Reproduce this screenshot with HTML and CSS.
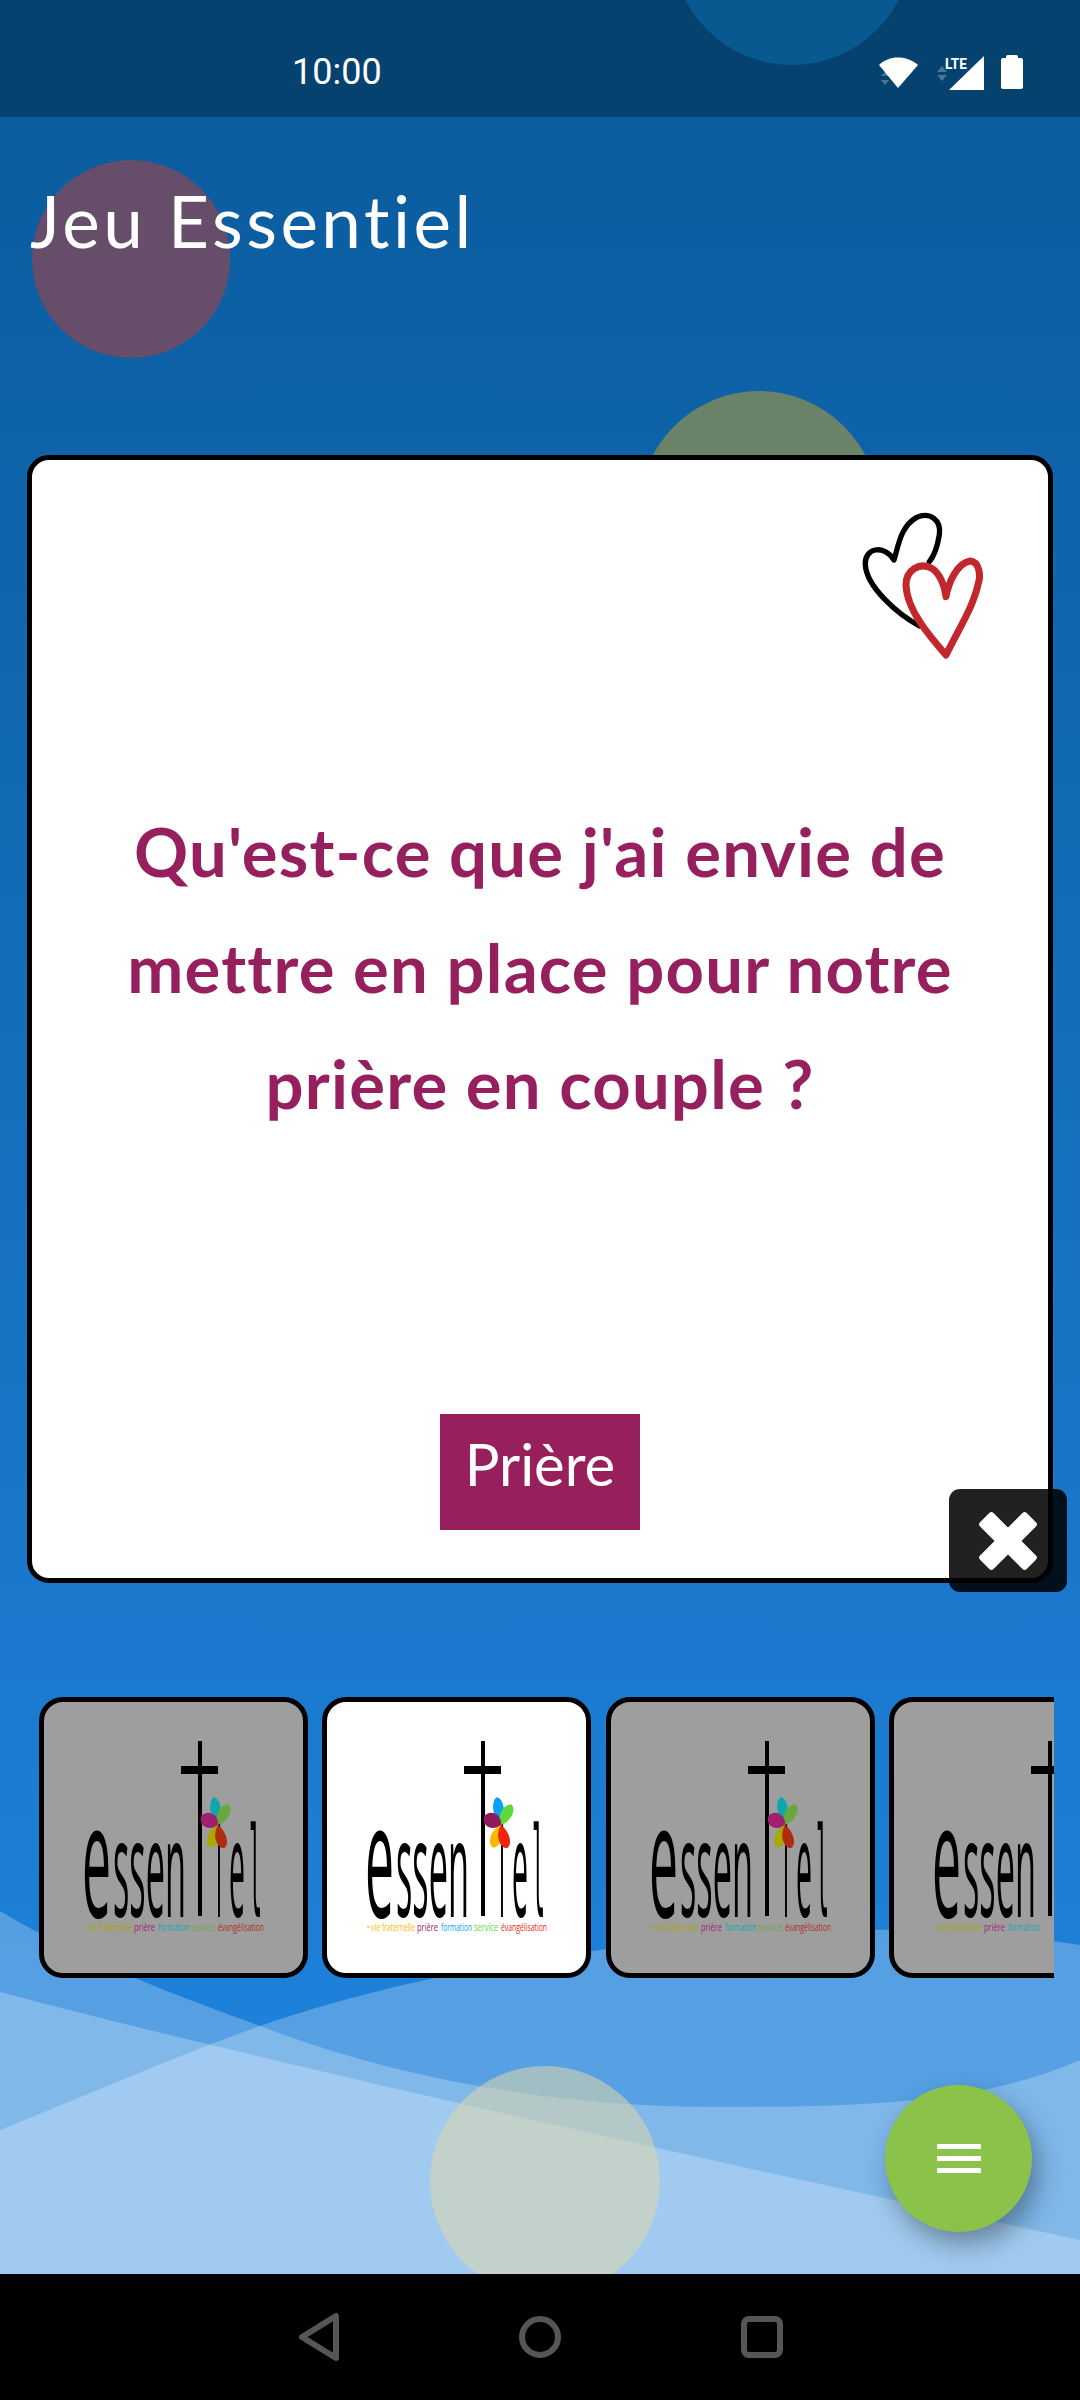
FILE: index.html
```html
<!DOCTYPE html>
<html lang="fr">
<head>
    <meta charset="UTF-8">
    <meta name="viewport" content="width=device-width, initial-scale=1.0">
    <title>Jeu Essentiel</title>
    <link rel="stylesheet" href="styles.css">
</head>
<body>

    <div class="screen">

        <!-- Background decoration -->
        <div class="bubble bubble-blue"></div>
        <div class="bubble bubble-red"></div>
        <div class="bubble bubble-green"></div>
        <svg class="waves" viewBox="0 0 1080 500" preserveAspectRatio="none">
            <path d="M0 31C90 85 190 120 260 146C400 200 560 227 716 227C850 227 980 225 1080 180V394H0Z"/>
            <path d="M0 250C90 214 170 178 260 146C420 90 640 55 864 50C950 48 1020 55 1080 65V394H0Z"/>
            <path d="M0 112C200 165 600 258 1080 360V394H0Z"/>
        </svg>
        <div class="bubble bubble-pale"></div>

        <div class="status-bar">
            <span class="clock">10:00</span>
            <div class="status-icons">
                <svg class="icon-wifi" width="44" height="36" viewBox="0 0 44 36">
                    <path class="muted" d="M5 22l4 -4 4 4ZM5 26h8l-4 5Z"/>
                    <path d="M3 11C13 1 31 1 42 11L22 34Z"/>
                </svg>
                <svg class="icon-signal" width="50" height="38" viewBox="0 0 50 38">
                    <path class="muted" d="M2 19l5 -6 5 6ZM2 22h10l-5 6Z"/>
                    <path d="M49 3V37H14Z"/>
                    <text x="10" y="16" class="lte" textLength="22" lengthAdjust="spacingAndGlyphs">LTE</text>
                </svg>
                <svg class="icon-battery" width="24" height="36" viewBox="0 0 24 36">
                    <path d="M6 3Q6 1 8 1H16Q18 1 18 3V4H21Q23 4 23 6V33Q23 35 21 35H3Q1 35 1 33V6Q1 4 3 4H6Z"/>
                </svg>
            </div>
        </div>

        <h1 class="page-title">Jeu Essentiel</h1>

        <div class="question-card">
            <svg class="hearts" width="200" height="200" viewBox="0 0 600 600">
                <path class="heart-black" d="M298 438C230 400 140 320 136 255C132 205 190 190 222 240C235 200 240 140 290 112C330 95 365 120 358 165C352 200 345 225 328 245"/>
                <path class="heart-red" d="M378 525C330 470 260 390 258 315C258 270 300 245 335 265C360 280 375 320 378 350C385 310 410 250 450 243C480 245 482 290 475 310C460 380 420 440 378 525Z"/>
            </svg>
            <p class="question">Qu'est-ce que j'ai envie de<br>mettre en place pour notre<br>prière en couple ?</p>
            <div class="category">Prière</div>
        </div>

        <div class="strip">
            <div class="logo-card dimmed">
                <svg class="logo" viewBox="0 0 259 271">
                    <text class="logo-word" x="38" y="215" font-size="160" textLength="29" lengthAdjust="spacingAndGlyphs">e</text>
                    <text class="logo-word" x="69" y="215" font-size="135" textLength="73" lengthAdjust="spacingAndGlyphs">ssen</text>
                    <rect x="154" y="39" width="4" height="175"/>
                    <rect x="137" y="64" width="37" height="8"/>
                    <text class="logo-word" x="172" y="215" font-size="135" textLength="6" lengthAdjust="spacingAndGlyphs">i</text>
                    <text class="logo-word" x="185" y="215" font-size="135" textLength="16" lengthAdjust="spacingAndGlyphs">e</text>
                    <text class="logo-mono" x="205" y="215" font-size="125" textLength="13" lengthAdjust="spacingAndGlyphs">l</text>
                    <g transform="translate(174 123)">
                        <path class="petal-a" d="M0 0C-9 -9 -8 -26 -2 -28C5 -26 6 -10 0 0Z" transform="rotate(-4)"/>
                        <path class="petal-b" d="M0 0C-9 -7 -8 -20 -1 -23C7 -20 6 -7 0 0Z" transform="rotate(30)"/>
                        <path class="petal-c" d="M0 0C-11 -4 -11 -17 -1 -19C9 -17 9 -4 0 0Z" transform="rotate(-58)"/>
                        <path class="petal-d" d="M0 0C-9 8 -8 22 -1 24C6 22 6 8 0 0Z" transform="rotate(17)"/>
                        <path class="petal-e" d="M0 0C-9 8 -8 22 -1 24C6 22 6 8 0 0Z" transform="rotate(-17)"/>
                    </g>
                    <text class="logo-tag tag-d" x="40" y="229" textLength="48" lengthAdjust="spacingAndGlyphs">• vie fraternelle</text>
                    <text class="logo-tag tag-c" x="90" y="229" textLength="21" lengthAdjust="spacingAndGlyphs">prière</text>
                    <text class="logo-tag tag-a" x="114" y="229" textLength="31" lengthAdjust="spacingAndGlyphs">formation</text>
                    <text class="logo-tag tag-b" x="147" y="229" textLength="24" lengthAdjust="spacingAndGlyphs">service</text>
                    <text class="logo-tag tag-e" x="174" y="229" textLength="46" lengthAdjust="spacingAndGlyphs">évangélisation</text>
                </svg>
            </div>
            <div class="logo-card">
                <svg class="logo" viewBox="0 0 259 271">
                    <text class="logo-word" x="38" y="215" font-size="160" textLength="29" lengthAdjust="spacingAndGlyphs">e</text>
                    <text class="logo-word" x="69" y="215" font-size="135" textLength="73" lengthAdjust="spacingAndGlyphs">ssen</text>
                    <rect x="154" y="39" width="4" height="175"/>
                    <rect x="137" y="64" width="37" height="8"/>
                    <text class="logo-word" x="172" y="215" font-size="135" textLength="6" lengthAdjust="spacingAndGlyphs">i</text>
                    <text class="logo-word" x="185" y="215" font-size="135" textLength="16" lengthAdjust="spacingAndGlyphs">e</text>
                    <text class="logo-mono" x="205" y="215" font-size="125" textLength="13" lengthAdjust="spacingAndGlyphs">l</text>
                    <g transform="translate(174 123)">
                        <path class="petal-a" d="M0 0C-9 -9 -8 -26 -2 -28C5 -26 6 -10 0 0Z" transform="rotate(-4)"/>
                        <path class="petal-b" d="M0 0C-9 -7 -8 -20 -1 -23C7 -20 6 -7 0 0Z" transform="rotate(30)"/>
                        <path class="petal-c" d="M0 0C-11 -4 -11 -17 -1 -19C9 -17 9 -4 0 0Z" transform="rotate(-58)"/>
                        <path class="petal-d" d="M0 0C-9 8 -8 22 -1 24C6 22 6 8 0 0Z" transform="rotate(17)"/>
                        <path class="petal-e" d="M0 0C-9 8 -8 22 -1 24C6 22 6 8 0 0Z" transform="rotate(-17)"/>
                    </g>
                    <text class="logo-tag tag-d" x="40" y="229" textLength="48" lengthAdjust="spacingAndGlyphs">• vie fraternelle</text>
                    <text class="logo-tag tag-c" x="90" y="229" textLength="21" lengthAdjust="spacingAndGlyphs">prière</text>
                    <text class="logo-tag tag-a" x="114" y="229" textLength="31" lengthAdjust="spacingAndGlyphs">formation</text>
                    <text class="logo-tag tag-b" x="147" y="229" textLength="24" lengthAdjust="spacingAndGlyphs">service</text>
                    <text class="logo-tag tag-e" x="174" y="229" textLength="46" lengthAdjust="spacingAndGlyphs">évangélisation</text>
                </svg>
            </div>
            <div class="logo-card dimmed">
                <svg class="logo" viewBox="0 0 259 271">
                    <text class="logo-word" x="38" y="215" font-size="160" textLength="29" lengthAdjust="spacingAndGlyphs">e</text>
                    <text class="logo-word" x="69" y="215" font-size="135" textLength="73" lengthAdjust="spacingAndGlyphs">ssen</text>
                    <rect x="154" y="39" width="4" height="175"/>
                    <rect x="137" y="64" width="37" height="8"/>
                    <text class="logo-word" x="172" y="215" font-size="135" textLength="6" lengthAdjust="spacingAndGlyphs">i</text>
                    <text class="logo-word" x="185" y="215" font-size="135" textLength="16" lengthAdjust="spacingAndGlyphs">e</text>
                    <text class="logo-mono" x="205" y="215" font-size="125" textLength="13" lengthAdjust="spacingAndGlyphs">l</text>
                    <g transform="translate(174 123)">
                        <path class="petal-a" d="M0 0C-9 -9 -8 -26 -2 -28C5 -26 6 -10 0 0Z" transform="rotate(-4)"/>
                        <path class="petal-b" d="M0 0C-9 -7 -8 -20 -1 -23C7 -20 6 -7 0 0Z" transform="rotate(30)"/>
                        <path class="petal-c" d="M0 0C-11 -4 -11 -17 -1 -19C9 -17 9 -4 0 0Z" transform="rotate(-58)"/>
                        <path class="petal-d" d="M0 0C-9 8 -8 22 -1 24C6 22 6 8 0 0Z" transform="rotate(17)"/>
                        <path class="petal-e" d="M0 0C-9 8 -8 22 -1 24C6 22 6 8 0 0Z" transform="rotate(-17)"/>
                    </g>
                    <text class="logo-tag tag-d" x="40" y="229" textLength="48" lengthAdjust="spacingAndGlyphs">• vie fraternelle</text>
                    <text class="logo-tag tag-c" x="90" y="229" textLength="21" lengthAdjust="spacingAndGlyphs">prière</text>
                    <text class="logo-tag tag-a" x="114" y="229" textLength="31" lengthAdjust="spacingAndGlyphs">formation</text>
                    <text class="logo-tag tag-b" x="147" y="229" textLength="24" lengthAdjust="spacingAndGlyphs">service</text>
                    <text class="logo-tag tag-e" x="174" y="229" textLength="46" lengthAdjust="spacingAndGlyphs">évangélisation</text>
                </svg>
            </div>
            <div class="logo-card dimmed">
                <svg class="logo" viewBox="0 0 259 271">
                    <text class="logo-word" x="38" y="215" font-size="160" textLength="29" lengthAdjust="spacingAndGlyphs">e</text>
                    <text class="logo-word" x="69" y="215" font-size="135" textLength="73" lengthAdjust="spacingAndGlyphs">ssen</text>
                    <rect x="154" y="39" width="4" height="175"/>
                    <rect x="137" y="64" width="37" height="8"/>
                    <text class="logo-tag tag-d" x="40" y="229" textLength="48" lengthAdjust="spacingAndGlyphs">• vie fraternelle</text>
                    <text class="logo-tag tag-c" x="90" y="229" textLength="21" lengthAdjust="spacingAndGlyphs">prière</text>
                    <text class="logo-tag tag-a" x="114" y="229" textLength="31" lengthAdjust="spacingAndGlyphs">formation</text>
                </svg>
            </div>
        </div>

        <div class="spacer"></div>

        <div class="nav-bar">
            <svg width="46" height="52" viewBox="0 0 46 52"><path d="M39 5V47L5 26Z"/></svg>
            <svg width="50" height="52" viewBox="0 0 50 52"><circle cx="25" cy="26" r="18"/></svg>
            <svg width="50" height="52" viewBox="0 0 50 52"><rect x="7" y="8" width="36" height="36" rx="5"/></svg>
        </div>

        <!-- Floating controls -->
        <button class="close-btn">
            <svg width="60" height="60" viewBox="0 0 60 60">
                <rect x="20.5" y="-3" width="19" height="66" rx="3" transform="rotate(45 30 30)"/>
                <rect x="20.5" y="-3" width="19" height="66" rx="3" transform="rotate(-45 30 30)"/>
            </svg>
        </button>
        <button class="menu-fab"><span></span><span></span><span></span></button>
    </div>

</body>
</html>
```
FILE: styles.css
```css
body {
    margin: 0;
    font-family: Lato, "Noto Sans", sans-serif;
}

.screen {
    position: relative;
    width: 1080px;
    height: 2400px;
    overflow: hidden;
    display: flex;
    flex-direction: column;
    background: linear-gradient(180deg, #0a5a9b 0%, #1e81da 85%);
}

/* Background decoration */
.bubble {
    position: absolute;
    border-radius: 50%;
}

.bubble-blue {
    left: 672px;
    top: -175px;
    width: 240px;
    height: 240px;
    background-color: #07598f;
    z-index: 1;
}

.bubble-red {
    left: 32px;
    top: 160px;
    width: 198px;
    height: 198px;
    background-color: #664d6a;
}

.bubble-green {
    left: 639px;
    top: 391px;
    width: 240px;
    height: 240px;
    background-color: #6a8368;
}

.bubble-pale {
    left: 430px;
    top: 2066px;
    width: 230px;
    height: 230px;
    background-color: rgba(222, 215, 170, 0.55);
}

.waves {
    position: absolute;
    left: 0;
    top: 1880px;
    width: 1080px;
    height: 500px;
}

.waves path {
    fill: rgba(255, 255, 255, 0.25);
}

/* Status bar */
.status-bar {
    height: 117px;
    flex-shrink: 0;
    display: flex;
    align-items: center;
    justify-content: space-between;
    padding: 26px 56px 0 292px;
    box-sizing: border-box;
    background-color: #05426f;
    color: white;
}

.clock {
    position: relative;
    z-index: 2;
    font-family: Roboto, sans-serif;
    font-size: 36px;
}

.status-icons {
    position: relative;
    z-index: 2;
    display: flex;
    align-items: center;
    gap: 15px;
}

.status-icons svg {
    fill: white;
}

.status-icons .muted {
    fill: #4a7696;
}

.lte {
    font-family: Roboto, sans-serif;
    font-size: 15px;
    font-weight: 700;
}

.page-title {
    position: relative;
    margin: 56px 0 0 30px;
    height: 282px;
    font-size: 71px;
    font-weight: 400;
    line-height: 96px;
    letter-spacing: 3.5px;
    color: white;
}

/* Question card */
.question-card {
    position: relative;
    height: 1128px;
    margin: 0 27px;
    box-sizing: border-box;
    flex-shrink: 0;
    display: flex;
    flex-direction: column;
    align-items: center;
    background-color: white;
    border: 5px solid black;
    border-radius: 22px;
}

.hearts {
    align-self: flex-end;
    margin: 20px 28px 0 0;
}

.hearts path {
    fill: none;
    stroke-linecap: round;
    stroke-linejoin: round;
}

.heart-black {
    stroke: black;
    stroke-width: 16;
}

.heart-red {
    stroke: #c1272d;
    stroke-width: 21;
}

.question {
    margin: 113px 0 0;
    font-size: 67px;
    font-weight: 700;
    line-height: 116px;
    letter-spacing: 1.2px;
    text-align: center;
    color: #96205e;
}

.category {
    width: 200px;
    height: 116px;
    margin-top: 273px;
    background-color: #97205c;
    color: white;
    font-size: 58px;
    line-height: 100px;
    text-align: center;
}

/* Logo strip */
.strip {
    position: relative;
    display: flex;
    gap: 14.3px;
    margin: 114px 26px 0 27px;
    padding-left: 12px;
    overflow: hidden;
    flex-shrink: 0;
}

.logo-card {
    --petal-a: #079ff9;
    --petal-b: #60d838;
    --petal-c: #8e1b5c;
    --petal-d: #fbb800;
    --petal-e: #f0230c;
    width: 269px;
    height: 281px;
    flex-shrink: 0;
    box-sizing: border-box;
    background-color: white;
    border: 5px solid black;
    border-radius: 24px;
}

.logo-card.dimmed {
    --petal-a: #0ea7ae;
    --petal-b: #68a83e;
    --petal-c: #a01f70;
    --petal-d: #a8a800;
    --petal-e: #b02c10;
    background-color: #9e9e9e;
}

.logo {
    display: block;
    width: 259px;
    height: 271px;
}

.logo-word {
    font-family: "Open Sans", sans-serif;
}

.logo-mono {
    font-family: "DejaVu Sans Mono", monospace;
}

.logo-tag {
    font-family: "Open Sans", sans-serif;
    font-size: 11px;
}

.petal-a, .tag-a { fill: var(--petal-a); }
.petal-b, .tag-b { fill: var(--petal-b); }
.petal-c, .tag-c { fill: var(--petal-c); }
.petal-d, .tag-d { fill: var(--petal-d); }
.petal-e, .tag-e { fill: var(--petal-e); }

.spacer {
    flex: 1;
}

/* Navigation bar */
.nav-bar {
    position: relative;
    height: 126px;
    flex-shrink: 0;
    display: flex;
    align-items: center;
    justify-content: center;
    gap: 172px;
    padding-left: 4px;
    background-color: black;
}

.nav-bar svg {
    fill: none;
    stroke: #565656;
    stroke-width: 6;
    stroke-linejoin: round;
}

/* Floating controls */
.close-btn {
    position: absolute;
    left: 949px;
    top: 1489px;
    width: 118px;
    height: 103px;
    display: flex;
    align-items: center;
    justify-content: center;
    padding: 0;
    border: none;
    border-radius: 11px;
    background-color: rgba(0, 0, 0, 0.87);
    z-index: 3;
}

.close-btn svg {
    fill: white;
}

.menu-fab {
    position: absolute;
    left: 885px;
    top: 2085px;
    width: 147px;
    height: 147px;
    display: flex;
    flex-direction: column;
    align-items: center;
    justify-content: center;
    gap: 7px;
    padding: 0;
    border: none;
    border-radius: 50%;
    background-color: #8bc34a;
    box-shadow: 6px 12px 26px rgba(0, 0, 0, 0.35);
}

.menu-fab span {
    width: 44px;
    height: 5px;
    background-color: white;
}
```
